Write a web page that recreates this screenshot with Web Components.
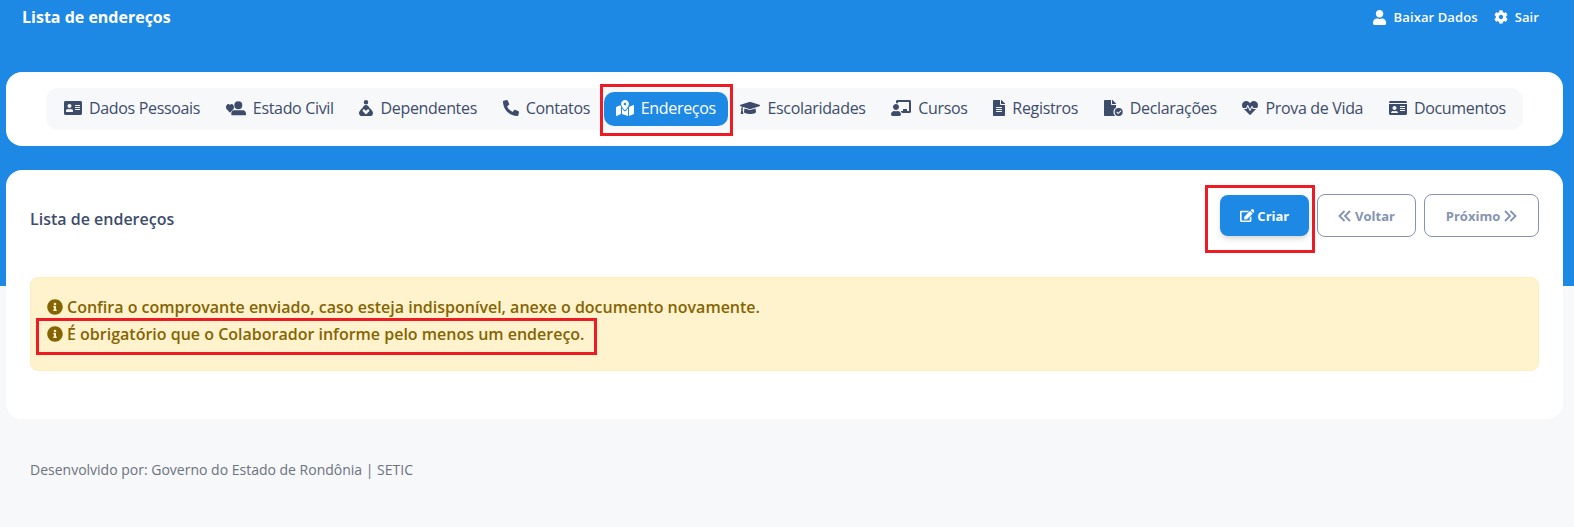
<!DOCTYPE html>
<html lang="pt-BR">
<head>
<meta charset="utf-8">
<title>Lista de endereços</title>
<style>
html,body{margin:0;padding:0;height:100%;overflow:hidden}
body{font-family:"Open Sans",sans-serif}
</style>
</head>
<body>
<app-shell>
  <top-bar slot="top" heading="Lista de endereços">
    <top-link icon="user" size="15">Baixar Dados</top-link>
    <top-link icon="cog" size="14">Sair</top-link>
  </top-bar>

  <tab-nav slot="nav">
    <tab-item icon="addressCard">Dados Pessoais</tab-item>
    <tab-item icon="heartUser">Estado Civil</tab-item>
    <tab-item icon="nursing">Dependentes</tab-item>
    <tab-item icon="phone">Contatos</tab-item>
    <red-mark style="--t:-8px;--r:-5px;--b:-10px;--l:-4px;margin:0 -1px 0 1px"><tab-item icon="mapMarked" active>Endereços</tab-item></red-mark>
    <tab-item icon="cap">Escolaridades</tab-item>
    <tab-item icon="teacher">Cursos</tab-item>
    <tab-item icon="file">Registros</tab-item>
    <tab-item icon="fileCheck">Declarações</tab-item>
    <tab-item icon="heartbeat">Prova de Vida</tab-item>
    <tab-item icon="idCard">Documentos</tab-item>
  </tab-nav>

  <list-card heading="Lista de endereços">
    <red-mark slot="actions" style="--t:-10px;--r:-6px;--b:-17px;--l:-15px"><action-button kind="primary" icon="edit" w="89">Criar</action-button></red-mark>
    <action-button slot="actions" kind="outline" chevron="left" w="99">Voltar</action-button>
    <action-button slot="actions" kind="outline" chevron="right" w="115">Próximo</action-button>
    <alert-box>
      <alert-line>Confira o comprovante enviado, caso esteja indisponível, anexe o documento novamente.</alert-line>
      <red-mark style="--t:-4px;--r:-12px;--b:-9px;--l:-11px;display:block;width:fit-content"><alert-line>É obrigatório que o Colaborador informe pelo menos um endereço.</alert-line></red-mark>
    </alert-box>
  </list-card>

  <page-footer slot="footer">Desenvolvido por: Governo do Estado de Rondônia | SETIC</page-footer>
</app-shell>

<script>
// icones desenhados inline, sem rede
const ICONS = {
  addressCard: [576, "M528 32H48C21.5 32 0 53.5 0 80v352c0 26.5 21.5 48 48 48h480c26.5 0 48-21.5 48-48V80c0-26.5-21.5-48-48-48zm-352 96c35.3 0 64 28.7 64 64s-28.7 64-64 64-64-28.7-64-64 28.7-64 64-64zm112 236.8c0 10.6-10 19.2-22.4 19.2H86.4C74 384 64 375.4 64 364.8v-19.2c0-31.8 30.1-57.6 67.2-57.6h5c12.3 5.1 25.7 8 39.8 8s27.6-2.9 39.8-8h5c37.1 0 67.2 25.8 67.2 57.6v19.2zM512 312c0 4.4-3.6 8-8 8H360c-4.4 0-8-3.6-8-8v-16c0-4.4 3.6-8 8-8h144c4.4 0 8 3.6 8 8v16zm0-64c0 4.4-3.6 8-8 8H360c-4.4 0-8-3.6-8-8v-16c0-4.4 3.6-8 8-8h144c4.4 0 8 3.6 8 8v16zm0-64c0 4.4-3.6 8-8 8H360c-4.4 0-8-3.6-8-8v-16c0-4.4 3.6-8 8-8h144c4.4 0 8 3.6 8 8v16z"],
  heartUser: [640, "M394 42a128 128 0 1 0 0 256a128 128 0 1 0 0-256zM250 330H540c55 0 100 45 100 100v30c0 17-13 30-30 30H200c-17 0-30-13-30-30v-30c0-55 35-100 80-100zM128 406L16 290C-16 250 0 140 66 130c26-4 48 8 62 28 14-20 36-32 62-28 66 10 82 120 50 160z"],
  nursing: [448, "M224 0a72 72 0 1 0 0 144a72 72 0 1 0 0-144zM224 160c-50 0-88 30-100 78L60 300C20 340 0 380 0 420c0 50 40 92 90 92h268c50 0 90-42 90-92 0-40-20-80-60-120l-64-62c-12-48-50-78-100-78zM224 460L130 370c-22-22-18-56 8-68 22-10 48-2 60 16l26 30 26-30c12-18 38-26 60-16 26 12 30 46 8 68z"],
  phone: [512, "M497.39 361.8l-112-48a24 24 0 0 0-28 6.9l-49.600 60.600A370.660 370.660 0 0 1 130.600 204.110l60.600-49.600a23.940 23.940 0 0 0 6.900-28l-48-112A24.160 24.160 0 0 0 122.600.61l-104 24A24 24 0 0 0 0 48c0 256.500 207.900 464 464 464a24 24 0 0 0 23.400-18.600l24-104a24.290 24.290 0 0 0-14.010-27.600z"],
  mapMarked: [576, "M288 0c-69.590 0-126 56.410-126 126 0 56.260 82.350 158.800 113.900 196.020 6.390 7.540 17.820 7.540 24.200 0C331.650 284.800 414 182.260 414 126 414 56.410 357.590 0 288 0zm0 168c-23.200 0-42-18.800-42-42s18.800-42 42-42 42 18.800 42 42-18.800 42-42 42zM20.120 215.950A32.006 32.006 0 0 0 0 245.660v250.320c0 11.320 11.430 19.060 21.940 14.860L160 448V214.920c-8.840-15.980-16.070-31.540-21.250-46.420L20.120 215.950zM288 359.670c-14.070 0-27.380-6.180-36.510-16.960-19.660-23.200-40.570-49.620-59.490-76.720V448l192 64V266c-18.920 27.090-39.820 53.520-59.490 76.720-9.130 10.770-22.440 16.950-36.510 16.950zm266.060-198.510L416 224v288l139.880-55.950A31.996 31.996 0 0 0 576 426.340V176.020c0-11.320-11.430-19.060-21.940-14.860z"],
  cap: [640, "M622.340 153.200L343.400 67.500c-15.200-4.670-31.600-4.670-46.790 0L17.660 153.200c-23.540 7.230-23.540 38.360 0 45.590l48.630 14.940c-10.670 13.190-17.230 29.280-17.880 46.900C38.780 266.150 32 276.110 32 288c0 10.780 5.680 19.850 13.860 25.650L20.330 428.530C18.110 438.520 25.710 448 35.940 448h56.110c10.240 0 17.840-9.480 15.620-19.470L82.140 313.650C90.320 307.850 96 298.780 96 288c0-11.570-6.470-21.250-15.660-26.870.76-15.020 8.440-28.300 20.690-36.720L296.600 284.500c9.060 2.780 26.440 6.250 46.790 0l278.950-85.700c23.550-7.240 23.550-38.360 0-45.600zM352.790 315.090c-28.530 8.760-52.840 3.920-65.590 0l-145.020-44.550L128 384c0 35.350 85.960 64 192 64s192-28.650 192-64l-14.180-113.470-145.030 44.560z"],
  teacher: [640, "M208 352c-2.390 0-4.780.35-7.060 1.090C187.980 357.300 174.350 360 160 360c-14.350 0-27.980-2.700-40.950-6.910-2.280-.74-4.660-1.090-7.050-1.090C49.940 352-.33 402.480 0 464.620.14 490.880 21.730 512 48 512h224c26.270 0 47.860-21.120 48-47.38.33-62.140-49.940-112.620-112-112.620zm-48-32c53.020 0 96-42.980 96-96s-42.980-96-96-96-96 42.980-96 96 42.980 96 96 96zM592 0H208c-26.470 0-48 22.250-48 49.590V96c23.420 0 45.100 6.780 64 17.800V64h352v288h-64v-64H384v64h-76.240c19.100 16.690 33.120 38.730 39.690 64H592c26.470 0 48-22.250 48-49.590V49.590C640 22.250 618.470 0 592 0z"],
  file: [384, "M224 136V0H24C10.700 0 0 10.700 0 24v464c0 13.300 10.700 24 24 24h336c13.300 0 24-10.700 24-24V160H248c-13.200 0-24-10.800-24-24zm64 236c0 6.600-5.400 12-12 12H108c-6.600 0-12-5.400-12-12v-8c0-6.600 5.400-12 12-12h168c6.600 0 12 5.400 12 12v8zm0-64c0 6.600-5.400 12-12 12H108c-6.600 0-12-5.400-12-12v-8c0-6.600 5.400-12 12-12h168c6.600 0 12 5.400 12 12v8zm0-72v8c0 6.600-5.400 12-12 12H108c-6.600 0-12-5.400-12-12v-8c0-6.600 5.400-12 12-12h168c6.600 0 12 5.400 12 12zm96-114.100v6.100H256V0h6.100c6.400 0 12.500 2.500 17 7l97.900 98c4.500 4.500 7 10.600 7 16.900z"],
  fileCheck: [608, "M224 136V0H24C10.700 0 0 10.700 0 24v464c0 13.300 10.700 24 24 24H358A170 170 0 0 1 384 237V160H248c-13.200 0-24-10.800-24-24zM384 121.900v6.100H256V0h6.100c6.400 0 12.500 2.500 17 7l97.900 98c4.500 4.500 7 10.600 7 16.900zM470 256a128 128 0 1 1 0 256a128 128 0 1 1 0-256zM535 330l-80 80-40-40-22 22 62 62 102-102z"],
  heartbeat: [512, "M320.200 243.800l-49.700 99.400c-6 12.100-23.400 11.700-28.900-.6l-56.900-126.300-30 71.700H60.600l182.500 186.500c7.100 7.300 18.600 7.300 25.700 0L451.400 288H342.300l-22.100-44.200zM473.700 73.900l-2.400-2.500c-51.500-52.600-135.800-52.600-187.400 0L256 100l-27.900-28.500c-51.500-52.700-135.900-52.700-187.400 0l-2.400 2.400C-10.400 123.700-12.500 203 31 256h102.400l35.900-86.200c5.400-12.900 23.600-13.200 29.400-.4l58.200 129.300 49-97.900c5.900-11.800 22.700-11.800 28.600 0l27.600 55.200H481c43.500-53 41.400-132.300-7.300-182.100z"],
  idCard: [576, "M528 32H48C21.500 32 0 53.500 0 80v16h576V80c0-26.500-21.500-48-48-48zM0 432c0 26.500 21.500 48 48 48h480c26.500 0 48-21.500 48-48V128H0v304zm352-232c0-4.400 3.600-8 8-8h144c4.400 0 8 3.600 8 8v16c0 4.400-3.600 8-8 8H360c-4.400 0-8-3.600-8-8v-16zm0 64c0-4.400 3.600-8 8-8h144c4.400 0 8 3.600 8 8v16c0 4.400-3.600 8-8 8H360c-4.400 0-8-3.600-8-8v-16zm0 64c0-4.400 3.600-8 8-8h144c4.400 0 8 3.600 8 8v16c0 4.400-3.600 8-8 8H360c-4.400 0-8-3.600-8-8v-16zM176 192c35.300 0 64 28.700 64 64s-28.700 64-64 64-64-28.700-64-64 28.700-64 64-64zM67.100 396.200C75.500 370.500 99.600 352 128 352h8.200c12.300 5.100 25.700 8 39.800 8s27.600-2.900 39.800-8h8.200c28.400 0 52.500 18.500 60.900 44.200 3.200 9.900-5.200 19.800-15.600 19.800H82.700c-10.400 0-18.800-10-15.600-19.800z"],
  user: [448, "M224 256c70.700 0 128-57.300 128-128S294.700 0 224 0 96 57.300 96 128s57.300 128 128 128zm89.600 32h-16.700c-22.200 10.200-46.900 16-72.900 16s-50.600-5.800-72.900-16h-16.700C60.200 288 0 348.200 0 422.400V464c0 26.500 21.500 48 48 48h352c26.500 0 48-21.500 48-48v-41.600c0-74.200-60.200-134.400-134.400-134.400z"],
  cog: [512, "M487.400 315.700l-42.600-24.600c4.300-23.200 4.300-47 0-70.200l42.600-24.600c4.900-2.800 7.100-8.600 5.500-14-11.100-35.600-30-67.800-54.700-94.600-3.800-4.100-10-5.100-14.800-2.300L380.800 110c-17.900-15.400-38.500-27.300-60.800-35.100V25.800c0-5.600-3.900-10.500-9.400-11.700-36.700-8.200-74.300-7.800-109.200 0-5.500 1.200-9.400 6.100-9.400 11.700V75c-22.200 7.900-42.800 19.800-60.800 35.100L88.700 85.500c-4.900-2.800-11-1.900-14.800 2.300-24.700 26.700-43.600 58.900-54.700 94.600-1.700 5.400.6 11.200 5.500 14L67.300 221c-4.300 23.200-4.300 47 0 70.200l-42.600 24.600c-4.900 2.800-7.100 8.600-5.500 14 11.100 35.600 30 67.800 54.700 94.600 3.800 4.100 10 5.100 14.800 2.300l42.600-24.600c17.900 15.400 38.500 27.300 60.800 35.100v49.200c0 5.600 3.900 10.500 9.400 11.700 36.700 8.200 74.300 7.800 109.200 0 5.500-1.200 9.400-6.100 9.400-11.700v-49.200c22.200-7.900 42.800-19.800 60.800-35.100l42.600 24.600c4.900 2.800 11 1.900 14.800-2.300 24.700-26.700 43.600-58.900 54.700-94.600 1.500-5.500-.7-11.300-5.600-14.100zM256 336c-44.100 0-80-35.900-80-80s35.900-80 80-80 80 35.900 80 80-35.900 80-80 80z"],
  edit: [576, "M402.600 83.200l90.200 90.200c3.800 3.800 3.800 10 0 13.800L274.400 405.600l-92.800 10.300c-12.400 1.400-22.900-9.100-21.500-21.500l10.300-92.800L388.800 83.200c3.800-3.800 10-3.800 13.800 0zm162-22.900l-48.800-48.800c-15.200-15.200-39.900-15.200-55.200 0l-35.400 35.400c-3.800 3.800-3.800 10 0 13.800l90.200 90.200c3.800 3.800 10 3.800 13.800 0l35.400-35.400c15.200-15.300 15.200-40 0-55.200zM384 346.200V448H64V128h229.800c3.200 0 6.200-1.300 8.500-3.500l40-40c7.600-7.600 2.200-20.500-8.500-20.500H48C21.500 64 0 85.500 0 112v352c0 26.500 21.500 48 48 48h352c26.500 0 48-21.500 48-48V306.200c0-10.700-12.900-16-20.500-8.500l-40 40c-2.200 2.300-3.500 5.300-3.500 8.500z"],
  info: [512, "M256 8C119.043 8 8 119.083 8 256c0 136.997 111.043 248 248 248s248-111.003 248-248C504 119.083 392.957 8 256 8zm0 110c23.196 0 42 18.804 42 42s-18.804 42-42 42-42-18.804-42-42 18.804-42 42-42zm56 254c0 6.627-5.373 12-12 12h-88c-6.627 0-12-5.373-12-12v-24c0-6.627 5.373-12 12-12h12v-64h-12c-6.627 0-12-5.373-12-12v-24c0-6.627 5.373-12 12-12h64c6.627 0 12 5.373 12 12v100h12c6.627 0 12 5.373 12 12v24z"]
}

function iconSvg(name, size) {
  const [w, d] = ICONS[name]
  return `<svg width="${size * w / 512}" height="${size}" viewBox="0 0 ${w} 512" fill="currentColor" fill-rule="evenodd" style="display:block;flex:none" aria-hidden="true"><path d="${d}"/></svg>`
}

// as setas duplas dos botoes sao finas, entao vao com stroke
function chevronSvg(dir) {
  const pts = dir == "left" ? "M6.500 1L1.500 6l5 5M12 1L7 6l5 5" : "M1 1l5 5-5 5M6.500 1l5 5-5 5"
  return `<svg width="13" height="12" viewBox="0 0 13 12" fill="none" stroke="currentColor" stroke-width="1.900" style="display:block;flex:none" aria-hidden="true"><path d="${pts}"/></svg>`
}

// classe base: so cria o shadow root com o html recebido
class Base extends HTMLElement {
  constructor() {
    super()
    this.attachShadow({mode: "open"})
  }
  render(html) {
    this.shadowRoot.innerHTML = html
  }
}

class AppShell extends Base {
  connectedCallback() {
    this.render(`<style>
      :host{display:block;height:527px;background:linear-gradient(#1e88e5 286px,#f7f8fa 286px);color:#3e4c6b}
      .wrap{display:flex;flex-direction:column;padding:0 11px 0 6px}
      .stack{display:flex;flex-direction:column;gap:24px}
    </style>
    <slot name="top"></slot>
    <div class="wrap"><div class="stack"><slot name="nav"></slot><slot></slot></div><slot name="footer"></slot></div>`)
  }
}

class TopBar extends Base {
  connectedCallback() {
    this.render(`<style>
      :host{display:flex;justify-content:space-between;height:72px;align-items:flex-start;box-sizing:border-box;padding:6px 35px 0 22px;color:#fff}
      h1{margin:0;font-size:16px;line-height:22px;font-weight:700}
      .links{display:flex;gap:16px;align-items:center;height:22px}
    </style><h1>${this.getAttribute("heading")}</h1><div class="links"><slot></slot></div>`)
  }
}

class TopLink extends Base {
  connectedCallback() {
    this.render(`<style>
      :host{display:flex;align-items:center;gap:7px;font-size:13px;font-weight:600;letter-spacing:.1px}
    </style>${iconSvg(this.getAttribute("icon"), +this.getAttribute("size"))}<slot></slot>`)
  }
}

class TabNav extends Base {
  connectedCallback() {
    this.render(`<style>
      :host{display:block;background:#fff;border-radius:16px;padding:16px 40px}
      nav{display:flex;justify-content:space-between;align-items:center;background:#f7f8fa;border-radius:12px;padding:4px 5px}
    </style><nav><slot></slot></nav>`)
  }
}

class TabItem extends Base {
  connectedCallback() {
    const active = this.hasAttribute("active")
    this.render(`<style>
      :host{display:flex;align-items:center;gap:7px;height:34px;padding:0 12px 2px ${active ? 12 : 13}px;box-sizing:border-box;border-radius:10px;font-size:16px;letter-spacing:-.33px;white-space:nowrap;
        color:${active ? "#fff" : "#3e4c6b"};background:${active ? "#1e88e5" : "transparent"}}
    </style>${iconSvg(this.getAttribute("icon"), 16)}<slot></slot>`)
  }
}

class ListCard extends Base {
  connectedCallback() {
    this.render(`<style>
      :host{display:block;background:#fff;border-radius:16px;padding:24px;height:249px;box-sizing:border-box}
      header{display:flex;justify-content:space-between;align-items:center;height:43px;margin-bottom:40px}
      h2{margin:0;font-size:16px;font-weight:600;color:#3e4c6b;position:relative;top:3px}
      .actions{display:flex;gap:8px;align-items:center}
    </style>
    <header><h2>${this.getAttribute("heading")}</h2><div class="actions"><slot name="actions"></slot></div></header>
    <slot></slot>`)
  }
}

class ActionButton extends Base {
  connectedCallback() {
    const primary = this.getAttribute("kind") == "primary"
    const icon = this.getAttribute("icon")
    const chevron = this.getAttribute("chevron")
    const before = icon ? iconSvg(icon, 13) : chevron == "left" ? chevronSvg("left") : ""
    const after = chevron == "right" ? chevronSvg("right") : ""
    this.render(`<style>
      :host{display:flex;align-items:center;justify-content:center;gap:${primary ? 3 : 4}px;box-sizing:border-box;border-radius:8px;font-size:13px;font-weight:700;width:${this.getAttribute("w")}px;
        ${primary
          ? "height:41px;background:#1e88e5;color:#fff;box-shadow:0 4px 6px -1px rgba(0,0,0,.12),0 2px 4px -1px rgba(0,0,0,.07)"
          : "height:43px;background:#fff;color:#8494b2;border:1px solid #8494b2"}}
    </style>${before}<slot></slot>${after}`)
  }
}

class AlertBox extends Base {
  connectedCallback() {
    this.render(`<style>
      :host{display:flex;flex-direction:column;gap:3px;height:94px;box-sizing:border-box;padding:17px 16px 0;background:#fef3cd;border:1px solid #fdeeba;border-radius:8px;color:#856404;font-size:16px;font-weight:600}
    </style><slot></slot>`)
  }
}

class AlertLine extends Base {
  connectedCallback() {
    this.render(`<style>
      :host{display:flex;align-items:center;gap:4px;line-height:24px}
    </style>${iconSvg("info", 16)}<slot></slot>`)
  }
}

// moldura vermelha de anotacao, fica por cima do conteudo
class RedMark extends Base {
  connectedCallback() {
    this.render(`<style>
      :host{display:inline-block;position:relative}
      i{position:absolute;top:var(--t);right:var(--r);bottom:var(--b);left:var(--l);border:3px solid #ed1c24;pointer-events:none}
    </style><slot></slot><i></i>`)
  }
}

class PageFooter extends Base {
  connectedCallback() {
    this.render(`<style>
      :host{display:block;padding:41px 24px 0;font-size:14px;line-height:20px;color:#6b7280}
    </style><slot></slot>`)
  }
}

customElements.define("app-shell", AppShell)
customElements.define("top-bar", TopBar)
customElements.define("top-link", TopLink)
customElements.define("tab-nav", TabNav)
customElements.define("tab-item", TabItem)
customElements.define("list-card", ListCard)
customElements.define("action-button", ActionButton)
customElements.define("alert-box", AlertBox)
customElements.define("alert-line", AlertLine)
customElements.define("red-mark", RedMark)
customElements.define("page-footer", PageFooter)
</script>
</body>
</html>
